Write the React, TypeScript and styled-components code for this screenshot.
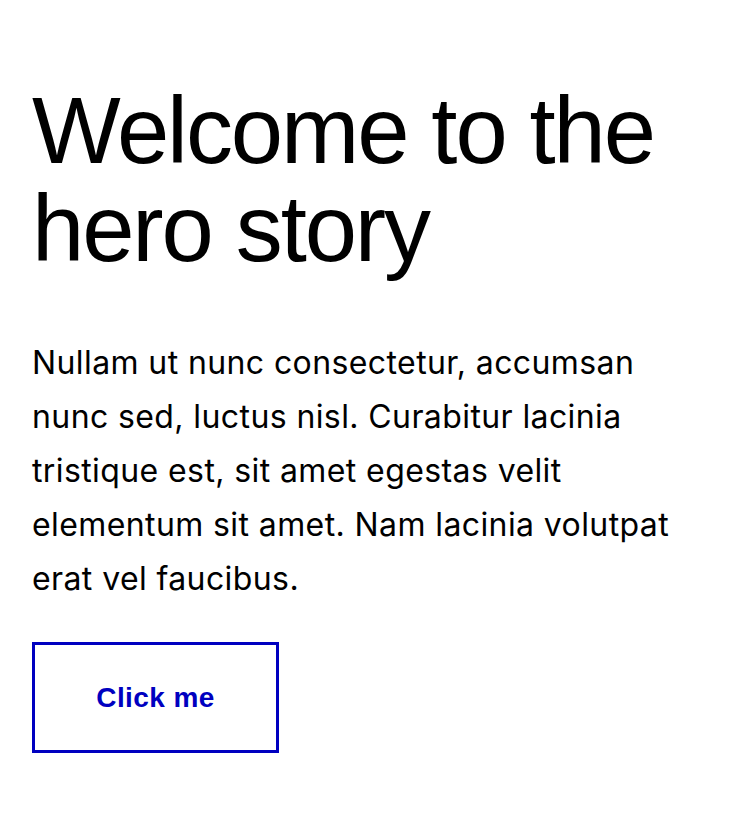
import React from "react";
import styled, { createGlobalStyle } from "styled-components";

const GlobalStyle = createGlobalStyle`
  html, body { margin: 0; padding: 0; background: #ffffff; }
  body { font-family: "Liberation Sans", Arial, sans-serif; color: #000; }
`;

const Hero = styled.section`
  padding: 82px 32px 40px 32px;
  display: flex;
  flex-direction: column;
  align-items: flex-start;
`;

const Title = styled.h1`
  margin: 0;
  font-family: "Liberation Sans", Arial, sans-serif;
  font-weight: 400;
  font-size: 94px;
  line-height: 98px;
  letter-spacing: -2.1px;
  color: #000;
`;

const Body = styled.p`
  margin: 58px 0 0 0;
  font-family: "Inter", "Liberation Sans", sans-serif;
  font-size: 32px;
  line-height: 54px;
  letter-spacing: 0.4px;
  color: #000;
  max-width: 660px;
`;

const Button = styled.button`
  margin-top: 36px;
  width: 247px;
  height: 111px;
  border: 3px solid #0000c0;
  background: #ffffff;
  color: #0000c0;
  font-family: "Liberation Sans", Arial, sans-serif;
  font-weight: 700;
  font-size: 28px;
  letter-spacing: 0.4px;
  cursor: pointer;
  padding: 0;
`;

export default function App() {
  return (
    <>
      <GlobalStyle />
      <Hero>
        <Title>
          Welcome to the
          <br />
          hero story
        </Title>
        <Body>
          Nullam ut nunc consectetur, accumsan nunc sed, luctus nisl. Curabitur lacinia tristique est,
          sit amet egestas velit elementum sit amet. Nam lacinia volutpat erat vel faucibus.
        </Body>
        <Button>Click me</Button>
      </Hero>
    </>
  );
}
